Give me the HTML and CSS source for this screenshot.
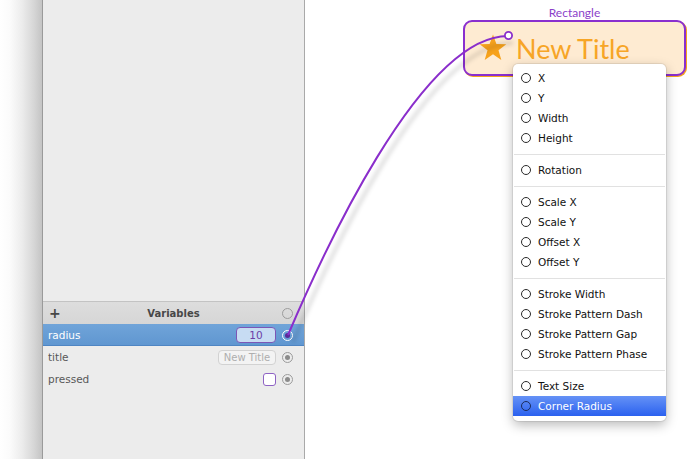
FILE: index.html
```html
<!DOCTYPE html>
<html>
<head>
<meta charset="utf-8">
<title>Variables</title>
<link rel="stylesheet" href="styles.css">
</head>
<body>
<div class="shade"></div>
<aside class="panel">
  <div class="panel-top"></div>
  <section class="vars">
    <header class="vars-head">
      <span class="plus">+</span>
      <span class="vars-title">Variables</span>
      <span class="port"></span>
    </header>
    <div class="var-row selected">
      <span class="var-name">radius</span>
      <span class="field field-num">10</span>
      <span class="port port-linked"></span>
    </div>
    <div class="var-row">
      <span class="var-name">title</span>
      <span class="field field-text">New Title</span>
      <span class="port port-dot"></span>
    </div>
    <div class="var-row">
      <span class="var-name">pressed</span>
      <span class="check"></span>
      <span class="port port-dot"></span>
    </div>
  </section>
</aside>
<main class="canvas">
  <div class="node">
    <div class="node-label">Rectangle</div>
    <div class="node-box">
      <svg class="star" width="28" height="27" viewBox="0 0 28 27"><polygon points="14,0.5 17.4,10 27.3,10.2 19.5,16.3 22.3,25.9 14,20.3 5.7,25.9 8.5,16.3 0.7,10.2 10.6,10" fill="#f7a21b"/></svg>
      <span class="node-title">New Title</span>
    </div>
  </div>
  <div class="menu">
    <div class="menu-item"><span class="radio"></span>X</div>
    <div class="menu-item"><span class="radio"></span>Y</div>
    <div class="menu-item"><span class="radio"></span>Width</div>
    <div class="menu-item"><span class="radio"></span>Height</div>
    <div class="menu-sep"></div>
    <div class="menu-item"><span class="radio"></span>Rotation</div>
    <div class="menu-sep"></div>
    <div class="menu-item"><span class="radio"></span>Scale X</div>
    <div class="menu-item"><span class="radio"></span>Scale Y</div>
    <div class="menu-item"><span class="radio"></span>Offset X</div>
    <div class="menu-item"><span class="radio"></span>Offset Y</div>
    <div class="menu-sep"></div>
    <div class="menu-item"><span class="radio"></span>Stroke Width</div>
    <div class="menu-item"><span class="radio"></span>Stroke Pattern Dash</div>
    <div class="menu-item"><span class="radio"></span>Stroke Pattern Gap</div>
    <div class="menu-item"><span class="radio"></span>Stroke Pattern Phase</div>
    <div class="menu-sep"></div>
    <div class="menu-item"><span class="radio"></span>Text Size</div>
    <div class="menu-item active"><span class="radio"></span>Corner Radius</div>
  </div>
</main>
<svg class="wires" width="700" height="459" viewBox="0 0 700 459">
  <defs>
    <filter id="soft" x="-20%" y="-20%" width="140%" height="140%"><feGaussianBlur stdDeviation="2"/></filter>
  </defs>
  <path d="M288,335 C320,260 420,36 508,36" transform="translate(5,7)" fill="none" stroke="rgba(0,0,0,0.16)" stroke-width="3" filter="url(#soft)"/>
  <path d="M288,335 C320,260 420,36 508,36" fill="none" stroke="#8a2ecb" stroke-width="2"/>
  <circle cx="508.5" cy="35.5" r="3.6" fill="#fff" stroke="#8a2ecb" stroke-width="1.8"/>
</svg>
</body>
</html>
```
FILE: styles.css
```css
html, body {
  margin: 0;
  padding: 0;
}

body {
  width: 700px;
  height: 459px;
  overflow: hidden;
  position: relative;
  display: flex;
  background: #fff;
  font-family: "DejaVu Sans", sans-serif;
  font-size: 10.5px;
}

.shade {
  width: 42px;
  flex: none;
  background: linear-gradient(to right, #ffffff 0, #fbfbfb 10px, #ececec 22px, #d6d6d6 34px, #c4c4c4 42px);
}

.panel {
  width: 263px;
  flex: none;
  box-sizing: border-box;
  border-left: 1px solid #9a9a9a;
  border-right: 1px solid #a9a9a9;
  background: #ececec;
  display: flex;
  flex-direction: column;
}

.panel-top {
  height: 301px;
  flex: none;
}

.vars-head {
  height: 22px;
  border-top: 1px solid #c3c3c3;
  background: linear-gradient(#dddddd, #d6d6d6);
  display: grid;
  grid-template-columns: 1fr auto 1fr;
  align-items: center;
  padding: 0 11px;
  color: #474747;
}

.plus {
  justify-self: start;
  margin-left: -5px;
  font-weight: bold;
  font-size: 14px;
  line-height: 14px;
}

.vars-title {
  font-weight: bold;
  font-size: 10px;
}

.vars-head .port {
  justify-self: end;
}

.var-row {
  height: 22px;
  box-sizing: border-box;
  display: flex;
  align-items: center;
  padding: 0 11px 0 5px;
  color: #585858;
}

.var-row.selected {
  background: linear-gradient(#70a4d9, #5f96d0);
  box-shadow: inset 0 -1px 0 #4e85c3;
  color: #fff;
}

.var-name {
  flex: 1;
}

.field {
  margin-right: 6px;
  box-sizing: border-box;
  border-radius: 4px;
  text-align: center;
}

.field-num {
  width: 40px;
  height: 16px;
  line-height: 14px;
  border: 1px solid #7b56b6;
  background: #c7dcf3;
  color: #6c3fa6;
}

.field-text {
  width: 58px;
  height: 15px;
  line-height: 13px;
  border: 1px solid #d2d2d2;
  background: #f3f3f3;
  color: #aeaeae;
  font-size: 10px;
}

.check {
  width: 13px;
  height: 13px;
  margin-right: 6px;
  box-sizing: border-box;
  border: 1px solid #8e63c4;
  border-radius: 3px;
  background: #fff;
}

.port {
  width: 11px;
  height: 11px;
  flex: none;
  box-sizing: border-box;
  border: 1px solid #9c9c9c;
  border-radius: 50%;
  display: grid;
  place-items: center;
}

.port-dot::after {
  content: "";
  width: 5px;
  height: 5px;
  border-radius: 50%;
  background: #8c8c8c;
}

.port-linked {
  border: 1.5px solid #fff;
}

.port-linked::after {
  content: "";
  width: 5px;
  height: 5px;
  border-radius: 50%;
  background: #5a2a98;
}

.canvas {
  flex: 1;
  position: relative;
}

.node {
  position: absolute;
  left: 158px;
  top: 5px;
  width: 223px;
  display: flex;
  flex-direction: column;
  align-items: center;
}

.node-label {
  height: 15px;
  line-height: 15px;
  font-family: Lato, sans-serif;
  font-size: 12px;
  color: #8b3fc9;
}

.node-box {
  align-self: stretch;
  height: 56px;
  box-sizing: border-box;
  border: 2px solid #8a2fcf;
  border-radius: 9px;
  background: #feebd2;
  box-shadow: 1px 1px 0 #f6a41e;
  display: flex;
  align-items: center;
  padding-left: 14px;
  gap: 9px;
}

.star {
  flex: none;
  margin-top: -1px;
}

.node-title {
  font-family: Lato, sans-serif;
  font-size: 27px;
  color: #f7a526;
  margin-top: 1px;
}

.menu {
  position: absolute;
  left: 208px;
  top: 64px;
  width: 153px;
  padding: 4px 0 5px;
  background: #fff;
  border-radius: 5px;
  box-shadow: 0 4px 12px rgba(0, 0, 0, 0.28), 0 0 0 1px rgba(0, 0, 0, 0.07);
  overflow: hidden;
  z-index: 2;
}

.menu-item {
  height: 20px;
  display: flex;
  align-items: center;
  gap: 7px;
  padding-left: 8px;
  color: #111;
}

.radio {
  width: 10px;
  height: 10px;
  box-sizing: border-box;
  border: 1px solid #2a2a2a;
  border-radius: 50%;
  flex: none;
}

.menu-item.active {
  background: linear-gradient(#6592f6, #2b61ef);
  color: #fff;
}

.menu-item.active .radio {
  border-color: #1b2c5c;
}

.menu-sep {
  height: 12px;
  display: flex;
  align-items: center;
  padding: 0 1px;
}

.menu-sep::before {
  content: "";
  flex: 1;
  height: 1px;
  background: #e1e1e1;
}

.wires {
  position: absolute;
  left: 0;
  top: 0;
  pointer-events: none;
  z-index: 1;
}
```
